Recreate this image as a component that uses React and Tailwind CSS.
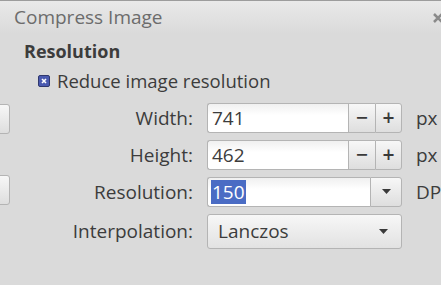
import { useState } from "react";

const font = { fontFamily: '"Open Sans", "Noto Sans", sans-serif' };

function SpinButton({ children, last }) {
  return (
    <div
      className={
        "flex h-full w-[27px] items-center justify-center border border-[#b4b4b4] bg-gradient-to-b from-[#f7f7f7] to-[#dedede] text-[21px] font-semibold text-[#3a3a3a] " +
        (last ? "rounded-r-[3px]" : "border-r-0")
      }
    >
      {children}
    </div>
  );
}

function Arrow() {
  return (
    <svg width="9" height="5" viewBox="0 0 9 5">
      <path d="M0 0h9L4.5 5z" fill="#3a3a3a" />
    </svg>
  );
}

function NumberRow({ label, value, unit }) {
  return (
    <>
      <div className="text-right text-[19px] text-[#3c3c3c]">{label}</div>
      <div className="flex h-[30px] w-[195px]">
        <div className="flex flex-1 items-center rounded-l-[3px] border border-r-0 border-[#b4b4b4] bg-gradient-to-b from-[#f0f0f0] to-white to-40% pl-[4px] text-[19px] text-[#3c3c3c]">
          {value}
        </div>
        <SpinButton>−</SpinButton>
        <SpinButton last>+</SpinButton>
      </div>
      <div className="text-[19px] text-[#3c3c3c]">{unit}</div>
    </>
  );
}

export default function App() {
  const [rows] = useState([
    { label: "Width:", value: "741", unit: "px" },
    { label: "Height:", value: "462", unit: "px" },
  ]);

  return (
    <div
      className="relative h-[285px] w-[441px] overflow-hidden bg-[#dadada]"
      style={font}
    >
      {/* title bar */}
      <div className="flex h-[34px] items-center justify-between border-t-[1px] border-[#9c9c9c] bg-gradient-to-b from-[#e9e9e9] to-[#dadada]">
        <span className="pl-[14px] text-[19px] text-[#6c6c6c]">Compress Image</span>
        <svg className="mr-[-3px]" width="12" height="12" viewBox="0 0 12 12">
          <path d="M2 2l8 8M10 2l-8 8" stroke="#8a8a8a" strokeWidth="2.5" />
        </svg>
      </div>

      <div className="flex">
        {/* clipped buttons of the neighbouring panel */}
        <div className="w-[10px]">
          <div className="ml-[-20px] mt-[70px] h-[30px] w-[30px] rounded-[3px] border border-[#b4b4b4] bg-gradient-to-b from-[#f7f7f7] to-[#dedede]" />
          <div className="ml-[-20px] mt-[41px] h-[30px] w-[30px] rounded-[3px] border border-[#b4b4b4] bg-gradient-to-b from-[#f7f7f7] to-[#dedede]" />
        </div>

        <div className="flex-1 pl-[14px]">
          <div className="mt-[4px] text-[18px] font-bold text-[#3c3c3c]">Resolution</div>
          <div className="ml-[14px] mt-[2px] flex items-center gap-[7px] text-[18.5px] text-[#3c3c3c]">
            <span className="flex h-[12px] w-[12px] items-center justify-center rounded-[2px] border border-[#30386e] bg-[#4a5ab0]">
              <svg width="6" height="6" viewBox="0 0 6 6">
                <path d="M1 1l4 4M5 1l-4 4" stroke="white" strokeWidth="1.6" />
              </svg>
            </span>
            Reduce image resolution
          </div>

          <div className="mt-[8px] grid grid-cols-[169px_195px_auto] items-center gap-x-[14px] gap-y-[7px]">
            {rows.map((r) => (
              <NumberRow key={r.label} {...r} />
            ))}

            <div className="text-right text-[19px] text-[#3c3c3c]">Resolution:</div>
            <div className="flex h-[30px] w-[195px]">
              <div className="flex flex-1 items-center rounded-l-[3px] border border-r-0 border-[#b4b4b4] bg-gradient-to-b from-[#f0f0f0] to-white to-40% pl-[3px] text-[19px]">
                <span className="bg-[#4a6cc4] px-[1px] leading-[24px] text-white">150</span>
              </div>
              <div className="flex w-[32px] items-center justify-center rounded-r-[3px] border border-[#b4b4b4] bg-gradient-to-b from-[#f7f7f7] to-[#dedede]">
                <Arrow />
              </div>
            </div>
            <div className="whitespace-nowrap text-[19px] text-[#3c3c3c]">DPI</div>

            <div className="text-right text-[19px] text-[#3c3c3c]">Interpolation:</div>
            <div className="flex h-[35px] w-[195px] items-center justify-between rounded-[3px] border border-[#b4b4b4] bg-gradient-to-b from-[#f7f7f7] to-[#e2e2e2] pl-[10px] pr-[13px] text-[19px] text-[#3c3c3c]">
              Lanczos
              <Arrow />
            </div>
            <div />
          </div>
        </div>
      </div>
    </div>
  );
}
